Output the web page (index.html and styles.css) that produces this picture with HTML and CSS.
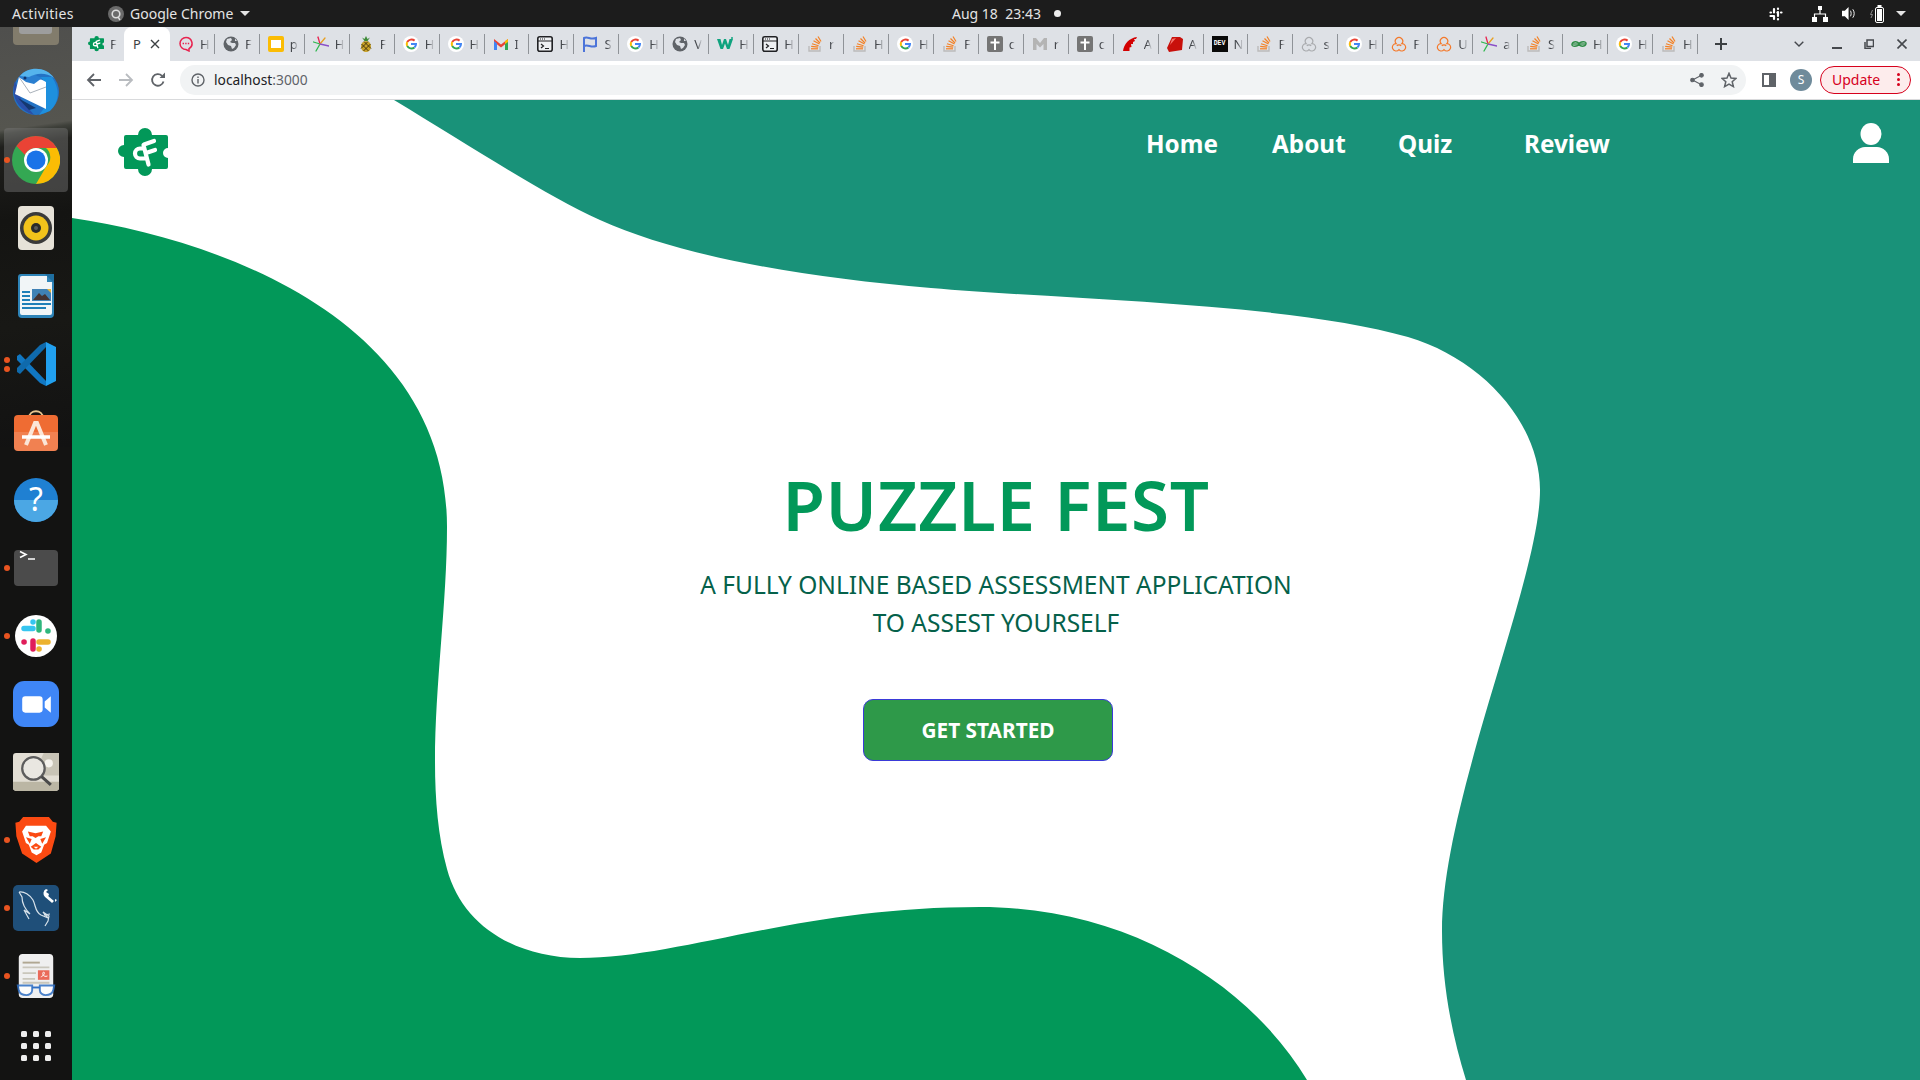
FILE: index.html
```html
<!DOCTYPE html>
<html lang="en">
<head>
<meta charset="utf-8">
<title>Puzzle Fest</title>
<link rel="stylesheet" href="styles.css">
</head>
<body>
<svg class="defs" width="0" height="0" aria-hidden="true">
  <symbol id="i-puzzle" viewBox="0 0 50 50"><path fill="#029859" d="M8 7H20a7 7 0 0 1 14 0H48a2 2 0 0 1 2 2V20a5 5 0 0 0 0 10V39a2 2 0 0 1-2 2H34a7 7 0 0 1-14 0H8a2 2 0 0 1-2-2V29a6 6 0 0 1 0-12V9a2 2 0 0 1 2-2z"/><path fill="none" stroke="#fff" stroke-width="4.200" stroke-linecap="round" d="M26 20.500h-4a5 5 0 0 0 0 10h5M25.500 17l5 19.500M26 16.500l10-3.500M28 25l9-3"/></symbol>
  <symbol id="i-chat" viewBox="0 0 16 16"><path fill="none" stroke="#e8234f" stroke-width="1.500" d="M8 1.500a6 6 0 0 1 3 11.200V15l-3-1.500A6 6 0 0 1 8 1.500z"/><path stroke="#e8234f" stroke-width="1.400" stroke-dasharray="1.400 1.200" d="M4.600 7.500h7"/></symbol>
  <symbol id="i-globe" viewBox="0 0 16 16"><circle cx="8" cy="8" r="7.500" fill="#5f6368"/><path fill="#dee1e6" d="M4 3l4-1 1 2-2 2 2 1 3 0 1 2-2 3-2 1-1-3-3-1-2-3zM12 2.500l2 2.500-2 0z"/></symbol>
  <symbol id="i-slides" viewBox="0 0 16 16"><rect width="16" height="16" rx="2" fill="#fbbc04"/><rect x="3" y="4" width="10" height="8" fill="#fff"/></symbol>
  <symbol id="i-star" viewBox="0 0 16 16"><g fill="none" stroke-width="1.300" stroke-linecap="round"><path stroke="#e8234f" d="M7 8L5 1"/><path stroke="#2db84d" d="M7 8L3 15"/><path stroke="#2db84d" d="M7 8L0.500 6"/><path stroke="#e8a020" d="M7 8l5-6"/><path stroke="#8a4fc7" d="M7 8l9 2"/></g></symbol>
  <symbol id="i-pine" viewBox="0 0 16 16"><path fill="#3d8b37" d="M8 0l1.500 3L12 1.500 9.500 5h-3L4 1.500 6.500 3z"/><ellipse cx="8" cy="10.500" rx="5" ry="5.500" fill="#c9a227"/><path stroke="#3a2c10" stroke-width=".9" fill="none" d="M3.500 8l7 7M6 5.500l7 7M12.500 8l-7 7M10 5.500l-7 7"/></symbol>
  <symbol id="i-g" viewBox="0 0 16 16"><circle cx="8" cy="8" r="8" fill="#fff"/><path fill="none" stroke="#ea4335" stroke-width="2" d="M11.600 4.600A5 5 0 0 0 4.200 6"/><path fill="none" stroke="#fbbc05" stroke-width="2" d="M4.200 6a5 5 0 0 0 0 4"/><path fill="none" stroke="#34a853" stroke-width="2" d="M4.200 10a5 5 0 0 0 7.200 1.600"/><path fill="none" stroke="#4285f4" stroke-width="2" d="M11.400 11.600A5 5 0 0 0 13 8H8"/></symbol>
  <symbol id="i-gmail" viewBox="0 0 16 16"><path fill="#ea4335" d="M1 3l7 5.500L15 3v3L8 11.500 1 6z"/><path fill="#4285f4" d="M1 5l3 2.500V14H1z"/><path fill="#34a853" d="M15 5l-3 2.500V14h3z"/><path fill="#fbbc04" d="M12 5l3-2v3l-3 2z"/></symbol>
  <symbol id="i-console" viewBox="0 0 16 16"><rect x=".8" y=".8" width="14.400" height="14.400" rx="2" fill="#eef0f3" stroke="#202124" stroke-width="1.600"/><path fill="none" stroke="#202124" stroke-width="1.200" d="M1 5h14M4 8l2.500 2L4 12M8 12.500h4"/><path stroke="#202124" stroke-dasharray="1 1" d="M3 3h5"/></symbol>
  <symbol id="i-flag" viewBox="0 0 16 16"><path fill="none" stroke="#4c74d9" stroke-width="2" d="M2 16V2c4-2 6 2 12 0v8c-5 2-8-2-12 0"/></symbol>
  <symbol id="i-so" viewBox="0 0 16 16"><path fill="none" stroke="#bcbbbb" stroke-width="1.400" d="M2 10v5h11v-5"/><g fill="none" stroke="#f48024" stroke-width="1.200"><path d="M4 12.800h7"/><path d="M4.200 10.300l7 .8"/><path d="M5 7.800l6.600 2"/><path d="M6.500 4.800l6 3.200"/><path d="M8.500 2.500l4.500 4.500"/><path d="M11 .5l3 5"/></g></symbol>
  <symbol id="i-cross" viewBox="0 0 16 16"><rect width="16" height="16" rx="2" fill="#757575"/><path fill="none" stroke="#fff" stroke-width="2" d="M8 2.500V14M3.500 6.500h9"/></symbol>
  <symbol id="i-greym" viewBox="0 0 16 16"><path fill="#b4b4b4" d="M1 14V2h3l4 5 4-5h3v12h-3.500V8L8 11.500 4.500 8v6z"/></symbol>
  <symbol id="i-rails" viewBox="0 0 16 16"><path fill="#d30001" d="M1 15C2 8 7 2 15 1l-1 2-2 0 1 2-2 1 0 2-2 0 .5 3-2 .5 0 3.500z"/></symbol>
  <symbol id="i-ruby" viewBox="0 0 16 16"><path fill="#c8100b" d="M5 1h8l3 2-1 11-13 2-2-4z"/><path fill="#f4736b" d="M5 3l-2 6 6-7z"/></symbol>
  <symbol id="i-cloud" viewBox="0 0 16 16"><path fill="none" stroke="currentColor" stroke-width="1.200" d="M5.200 7.600A3.700 3.700 0 1 1 10.800 7.600A3.700 3.700 0 1 1 8 13.600A3.700 3.700 0 1 1 5.200 7.600ZM5.800 9.800A3 3 0 0 1 10.200 9.800"/></symbol>
  <symbol id="i-geeks" viewBox="0 0 16 16"><g fill="none" stroke="#2f8d46" stroke-width="1.300"><path d="M8 8c-1-3-6-3-7 0s6 3 7 0c1 3 6 3 7 0s-6-3-7 0z"/><path d="M1 8h14"/></g></symbol>
</svg>

<header class="topbar">
  <span class="tb-activities">Activities</span>
  <span class="tb-app">
    <svg class="tb-chrome" viewBox="0 0 16 16"><circle cx="8" cy="8" r="8" fill="#6a6a6a"/><circle cx="8" cy="8" r="3.800" fill="none" stroke="#ddd" stroke-width="1.600"/><path stroke="#ddd" stroke-width="1.400" d="M10 11l2 3"/></svg>
    Google Chrome<i class="caret"></i>
  </span>
  <span class="tb-clock">Aug 18&nbsp; 23:43<i class="tb-dot"></i></span>
  <span class="tb-tray">
    <svg class="tray-slack" viewBox="0 0 14 14"><g stroke="#fff" stroke-width="2.200" stroke-linecap="round"><path d="M5 2v3.500M1.500 5.500h.5M9 1.500v.5M9 5v4M12.500 5.500H12M1.500 9H5M9 12.500V12M5 9v3"/><path d="M8.500 5.500h-.1"/></g></svg>
    <svg class="tray-net" viewBox="0 0 16 16"><path fill="#fff" d="M6 0h4v4H6zM0 11h5v5H0zM11 11h5v5h-5z"/><path fill="none" stroke="#fff" stroke-width="1.200" d="M8 4v4M2.500 11V8h11v3"/></svg>
    <svg class="tray-vol" viewBox="0 0 16 16"><path fill="#fff" d="M0 5h3l4-4v14l-4-4H0z"/><path fill="none" stroke="#fff" stroke-width="1" d="M9 5c1 1.500 1 4.500 0 6M11.500 3.500c2 2.500 2 6.500 0 9"/></svg>
    <svg class="tray-bat" viewBox="0 0 14 18"><path fill="none" stroke="#888" stroke-width="1" d="M2.500 5L.5 9.500h2L1 13"/><rect x="5.500" y="2.500" width="8" height="15" rx="1.500" fill="#1c1c1c" stroke="#fff"/><rect x="7.500" y="0" width="4" height="2" fill="#fff"/><rect x="7" y="4" width="5" height="12" fill="#fff"/></svg>
    <i class="caret caret-tray"></i>
  </span>
</header>

<div class="desktop">
  <nav class="dock" aria-label="Dock">
    <div class="dock-first">
      <svg class="dock-files" viewBox="0 0 46 22"><rect x="0" y="-6" width="46" height="27" rx="4" fill="#827c6c"/><rect x="6" y="-6" width="33" height="16" rx="3" fill="#9d9d9d"/></svg>
    </div>
    <div class="dock-item">
      <svg class="icon-48" viewBox="0 0 48 48">
        <circle cx="24" cy="24" r="23" fill="#2372c4"/>
        <path fill="#2a4fa8" d="M3 13C-2 28 6 42 22 47L9 31z"/>
        <path fill="#1e90de" d="M40 9c8 12 8 24-2 34l-11 4 6-8 1-16c0-6-1-10-6-14z"/>
        <path fill="#14386f" d="M6 30l18 10-7 2z"/>
        <path fill="#fff" d="M7 9l9 5q10-6 18 0L34 41 3 26z"/>
        <path fill="none" stroke="#aab2bb" d="M7 9l11 16 16-6"/>
        <path fill="#2a7fd0" d="M7 9l9-5 14 6-8 6-8-2z"/>
        <path fill="#55b4ec" d="M8 8C16-2 34-2 42 10 34 4 24 5 17 9z"/>
        <circle cx="13" cy="10" r="1.500" fill="#10356d"/>
      </svg>
    </div>
    <div class="dock-item is-active dot-1">
      <div class="dock-tile">
        <svg class="icon-48b" viewBox="0 0 48 48">
          <circle cx="24" cy="24" r="24" fill="#34a853"/>
          <path fill="#ea4335" d="M24 0a24 24 0 0 1 20.800 12H24a12 12 0 0 0-11 7L4.400 10A24 24 0 0 1 24 0z"/>
          <path fill="#fbbc04" d="M44.800 12A24 24 0 0 1 24 48l10.500-18A12 12 0 0 0 34 12z"/>
          <circle cx="24" cy="24" r="12" fill="#fff"/>
          <circle cx="24" cy="24" r="9.500" fill="#1a73e8"/>
        </svg>
      </div>
    </div>
    <div class="dock-item">
      <svg class="icon-44" viewBox="0 0 44 44">
        <rect x="0" y="0" width="36" height="44" rx="4" transform="translate(4)" fill="#e6e2d8"/>
        <circle cx="22" cy="22" r="16" fill="#3a3a3a"/><circle cx="22" cy="22" r="12.500" fill="#f1c21b"/><circle cx="22" cy="22" r="5" fill="#2a2a2a"/><circle cx="22" cy="22" r="2" fill="#5a5a5a"/>
      </svg>
    </div>
    <div class="dock-item">
      <svg class="icon-44" viewBox="0 0 44 44">
        <path fill="#2e84b8" d="M7 0h26l7 8v32a4 4 0 0 1-4 4H8a4 4 0 0 1-4-4V3a3 3 0 0 1 3-3z"/>
        <path fill="#f1f5f7" d="M8 2h25v6h5v31a2 2 0 0 1-2 2H8a2 2 0 0 1-2-2V4a2 2 0 0 1 2-2z"/>
        <path fill="#1f6fa0" d="M31 0h9v9z"/>
        <path fill="#1f7fb8" d="M8 17h8v2H8zM8 21h8v2H8zM8 25h8v2H8zM8 29h29v2H8zM8 33h24v2H8z"/>
        <rect x="18" y="15" width="19" height="12" fill="#3f81b5"/><path fill="#433" d="M19 26l6-7 3 3 3-2 5 6z"/><path fill="#e8b53a" d="M33 15h4v4z"/>
      </svg>
    </div>
    <div class="dock-item dot-2">
      <svg class="icon-44" viewBox="0 0 44 44">
        <path fill="#1177c2" d="M3 14l3-2 27 28-1 4-6-3L3 18z"/>
        <path fill="#0f6aac" d="M3 30l3 2 27-28-1-4-6 3L3 26z"/>
        <path fill="#21a0ef" d="M32 0l10 5v34l-10 5z"/>
      </svg>
    </div>
    <div class="dock-item">
      <svg class="icon-44" viewBox="0 0 44 44">
        <path fill="none" stroke="#e6c590" stroke-width="1.800" d="M15 8c0-9 14-9 14 0"/>
        <rect y="5" width="44" height="36" rx="4" fill="#ef6c33"/>
        <path fill="#fff" opacity=".15" d="M0 22h44v15a4 4 0 0 1-4 4H4a4 4 0 0 1-4-4z"/>
        <path fill="none" stroke="#fbe6d8" stroke-width="4" d="M12 35l9-22h2l9 22"/>
        <path fill="none" stroke="#fff" stroke-width="3.500" d="M8 27h28"/>
      </svg>
    </div>
    <div class="dock-item">
      <svg class="icon-44" viewBox="0 0 44 44">
        <circle cx="22" cy="22" r="22" fill="#1f80d2"/>
        <path fill="#4ba7e4" d="M0 22a22 22 0 0 0 44 0z"/>
        <text x="22" y="33" class="sym-help">?</text>
      </svg>
    </div>
    <div class="dock-item dot-1">
      <svg class="icon-44" viewBox="0 0 44 36">
        <rect width="44" height="36" rx="4" fill="#4b4b4b"/>
        <path fill="none" stroke="#fff" stroke-width="1.600" d="M6 1.500l6 3-6 3M14 9h7"/>
      </svg>
    </div>
    <div class="dock-item dot-1">
      <svg class="icon-41" viewBox="0 0 42 42">
        <circle cx="21" cy="21" r="21" fill="#fff"/>
        <g stroke-width="5.500" stroke-linecap="round" fill="none">
          <path stroke="#36c5f0" d="M18 13.500H9M18 7v.1"/>
          <path stroke="#2eb67d" d="M24 15V7M33 16h-.1"/>
          <path stroke="#ecb22e" d="M24 27h9M24 34h.1"/>
          <path stroke="#e01e5a" d="M18 26v8M9 27h.1"/>
        </g>
      </svg>
    </div>
    <div class="dock-item">
      <svg class="icon-45" viewBox="0 0 45 45">
        <rect width="45" height="45" rx="11" fill="#3f86f6"/>
        <rect x="9" y="15" width="20" height="16" rx="3" fill="#fff"/>
        <path fill="#fff" d="M31 20l6-5v16l-6-5z"/>
      </svg>
    </div>
    <div class="dock-item">
      <svg class="icon-45" viewBox="0 0 45 37">
        <rect width="45" height="37" rx="3" fill="#e2ded4"/>
        <path fill="#c8c4b6" d="M30 0h15v22H20z"/>
        <path fill="#bbb6a4" d="M0 28h45v6a3 3 0 0 1-3 3H3a3 3 0 0 1-3-3z"/>
        <circle cx="35" cy="10" r="4" fill="#f4f2ec"/>
        <circle cx="20" cy="15" r="11" fill="#e9e7e1" stroke="#5c5c5c" stroke-width="2.200"/>
        <path stroke="#4a4a4a" stroke-width="3" d="M28 23l9 8"/>
      </svg>
    </div>
    <div class="dock-item dot-1">
      <svg class="icon-45" viewBox="0 0 45 48">
        <path fill="#fb4a12" d="M9 0h27l4 5 4 1-1 14-5 18-15 10-15-10L2 20 1 6l4-1z"/>
        <path fill="#fff" d="M12 9h21l5 6-4 12-3 2-3 8-5 3-5-3-3-8-3-2-4-12z"/>
        <path fill="#fb4a12" d="M14 15l8 2 8-2-2 5h-3l-3 2-3-2h-3zM12 21l6 2-2 5zM33 21l-6 2 2 5zM17 31l5.500-4 5.500 4-3 3h-5z"/>
        <path fill="#fff" d="M20 31h5l-2.500 2z"/>
      </svg>
    </div>
    <div class="dock-item dot-1">
      <svg class="icon-45" viewBox="0 0 46 46">
        <rect width="46" height="46" rx="5" fill="#1f4f79"/>
        <path fill="none" stroke="#d7e2ea" stroke-width="1.200" d="M6 7c5-1 11 3 14 8 3 6 2 12 8 15l7 3-5-6 6 4-1 5-3 5M6 7l3 5c0 7 4 13 8 17l-6-4 5 9M31 30l6-1"/>
        <path fill="none" stroke="#fff" stroke-width="2.800" d="M33 11l7 6"/><path fill="#fff" d="M33 4a5 5 0 0 0-1 8l3 0 1-3-3-2 2-2zM42 17l2-2-2-1z"/>
      </svg>
    </div>
    <div class="dock-item dot-1">
      <svg class="icon-44" viewBox="0 0 44 46">
        <rect x="4" width="36" height="46" rx="4" fill="#efefef"/>
        <path fill="#b0a792" d="M8 8h18v2H8z"/>
        <path fill="#c9c6bb" d="M8 13h28v2H8zM8 19h14v2H8zM8 25h13v2H8zM8 29h28v2H8z"/>
        <rect x="24" y="17" width="12" height="10" fill="#ea6a5a"/><path fill="none" stroke="#fff" d="M27 24c3-1 5-5 3-5s-1 6 4 4"/>
        <path fill="#fff" opacity=".85" stroke="#2f6fc4" stroke-width="2" d="M3 33h15v5c0 3-3 5-6 5s-7-1-8-5zM26 33h15l-1 5c-1 4-5 5-8 5s-6-2-6-5z"/>
        <path stroke="#2f6fc4" stroke-width="2" d="M18 35h8"/>
      </svg>
    </div>
    <div class="dock-grid" aria-label="Show applications">
      <i></i><i></i><i></i><i></i><i></i><i></i><i></i><i></i><i></i>
    </div>
  </nav>

  <div class="browser">
    <div class="tabstrip">
      <div class="tab"><svg class="fav"><use href="#i-puzzle"/></svg><span class="tl">F</span></div>
      <div class="tab tab-active"><span class="tl">P</span><svg class="tab-x" viewBox="0 0 10 10"><path d="M1 1l8 8M9 1l-8 8"/></svg></div>
      <div class="tab sep"><svg class="fav"><use href="#i-chat"/></svg><span class="tl">H</span></div>
      <div class="tab sep"><svg class="fav"><use href="#i-globe"/></svg><span class="tl">F</span></div>
      <div class="tab sep"><svg class="fav"><use href="#i-slides"/></svg><span class="tl">p</span></div>
      <div class="tab sep"><svg class="fav"><use href="#i-star"/></svg><span class="tl">H</span></div>
      <div class="tab sep"><svg class="fav"><use href="#i-pine"/></svg><span class="tl">F</span></div>
      <div class="tab sep"><svg class="fav"><use href="#i-g"/></svg><span class="tl">H</span></div>
      <div class="tab sep"><svg class="fav"><use href="#i-g"/></svg><span class="tl">H</span></div>
      <div class="tab sep"><svg class="fav"><use href="#i-gmail"/></svg><span class="tl">I</span></div>
      <div class="tab sep"><svg class="fav"><use href="#i-console"/></svg><span class="tl">H</span></div>
      <div class="tab sep"><svg class="fav"><use href="#i-flag"/></svg><span class="tl">S</span></div>
      <div class="tab sep"><svg class="fav"><use href="#i-g"/></svg><span class="tl">H</span></div>
      <div class="tab sep"><svg class="fav"><use href="#i-globe"/></svg><span class="tl">V</span></div>
      <div class="tab sep"><svg class="fav" viewBox="0 0 16 16"><path fill="#10a37f" d="M0 3h3.500l1.500 6 2-6h2l2 6 1.500-6H16l-3.500 10h-2.500L8 7.500 6 13H3.500z"/><circle cx="15" cy="2" r="1" fill="#10a37f"/></svg><span class="tl">H</span></div>
      <div class="tab sep"><svg class="fav"><use href="#i-console"/></svg><span class="tl">H</span></div>
      <div class="tab sep"><svg class="fav"><use href="#i-so"/></svg><span class="tl">r</span></div>
      <div class="tab sep"><svg class="fav"><use href="#i-so"/></svg><span class="tl">H</span></div>
      <div class="tab sep"><svg class="fav"><use href="#i-g"/></svg><span class="tl">H</span></div>
      <div class="tab sep"><svg class="fav"><use href="#i-so"/></svg><span class="tl">F</span></div>
      <div class="tab sep"><svg class="fav"><use href="#i-cross"/></svg><span class="tl">c</span></div>
      <div class="tab sep"><svg class="fav"><use href="#i-greym"/></svg><span class="tl">r</span></div>
      <div class="tab sep"><svg class="fav"><use href="#i-cross"/></svg><span class="tl">c</span></div>
      <div class="tab sep"><svg class="fav"><use href="#i-rails"/></svg><span class="tl">A</span></div>
      <div class="tab sep"><svg class="fav"><use href="#i-ruby"/></svg><span class="tl">A</span></div>
      <div class="tab sep"><span class="fav-dev">DEV</span><span class="tl">N</span></div>
      <div class="tab sep"><svg class="fav"><use href="#i-so"/></svg><span class="tl">F</span></div>
      <div class="tab sep cloud-grey"><svg class="fav"><use href="#i-cloud"/></svg><span class="tl">s</span></div>
      <div class="tab sep"><svg class="fav"><use href="#i-g"/></svg><span class="tl">H</span></div>
      <div class="tab sep cloud-orange"><svg class="fav"><use href="#i-cloud"/></svg><span class="tl">F</span></div>
      <div class="tab sep cloud-orange"><svg class="fav"><use href="#i-cloud"/></svg><span class="tl">U</span></div>
      <div class="tab sep"><svg class="fav"><use href="#i-star"/></svg><span class="tl">a</span></div>
      <div class="tab sep"><svg class="fav"><use href="#i-so"/></svg><span class="tl">S</span></div>
      <div class="tab sep"><svg class="fav"><use href="#i-geeks"/></svg><span class="tl">H</span></div>
      <div class="tab sep"><svg class="fav"><use href="#i-g"/></svg><span class="tl">H</span></div>
      <div class="tab sep"><svg class="fav"><use href="#i-so"/></svg><span class="tl">H</span></div>
      <svg class="tab-new" viewBox="0 0 12 12"><path d="M6 0v12M0 6h12"/></svg>
      <svg class="tab-list" viewBox="0 0 10 6"><path d="M.7.700L5 5l4.300-4.300"/></svg>
      <svg class="win-min" viewBox="0 0 10 10"><path d="M0 9h10"/></svg>
      <svg class="win-max" viewBox="0 0 10 10"><path d="M3 1h6.500v6.500H3zM1 3v6.500h6"/></svg>
      <svg class="win-close" viewBox="0 0 10 10"><path d="M.5.500l9 9M9.500.500l-9 9"/></svg>
    </div>

    <div class="toolbar">
      <svg class="tool tool-back" viewBox="0 0 16 16"><path d="M15 8H2M8 2L2 8l6 6"/></svg>
      <svg class="tool tool-fwd" viewBox="0 0 16 16"><path d="M1 8h13M8 2l6 6-6 6"/></svg>
      <svg class="tool tool-reload" viewBox="0 0 16 16"><path d="M13.500 9.500A5.800 5.800 0 1 1 12 3.800"/><path class="fill" d="M9.500 6H15V.5z"/></svg>
      <div class="omnibox">
        <svg class="omni-info" viewBox="0 0 14 14"><circle cx="7" cy="7" r="6"/><path d="M7 6v4.500M7 3.500v1.500"/></svg>
        <span class="omni-url">localhost<span class="omni-port">:3000</span></span>
        <svg class="omni-share" viewBox="0 0 14 14"><circle cx="11.500" cy="2.300" r="1.800"/><circle cx="2.500" cy="7" r="1.800"/><circle cx="11.500" cy="11.700" r="1.800"/><path d="M11.500 2.300L2.500 7l9 4.700" fill="none"/></svg>
        <svg class="omni-star" viewBox="0 0 16 16"><path d="M8 1.300l2 4.700 5 .4-3.800 3.300 1.200 4.900L8 12l-4.400 2.600 1.200-4.900L1 6.400 6 6z"/></svg>
      </div>
      <svg class="side-panel" viewBox="0 0 14 14"><rect x="1" y="1" width="12" height="12" fill="none" stroke="#5f6368" stroke-width="2"/><rect x="7" y="1" width="6" height="12" fill="#5f6368"/></svg>
      <span class="avatar">S</span>
      <span class="update">Update<i class="update-dots"><b></b><b></b><b></b></i></span>
    </div>

    <main class="page">
      <svg class="waves" viewBox="72 100 1848 980" preserveAspectRatio="none" aria-hidden="true">
        <rect x="72" y="100" width="1848" height="980" fill="#199279"/>
        <path fill="#fff" d="M394 100C470 146 545 195 600 220C680 256 800 277 931 288C1070 300 1290 303 1408 337C1485 360 1540 425 1540 490C1540 580 1442 800 1442 931C1442 985 1452 1035 1466 1080L72 1080L72 100Z"/>
        <path fill="#029859" d="M72 218C220 240 447 320 447 527C447 640 420 770 447 869C462 925 515 958 580 958C680 958 800 907 980 907C1130 907 1250 985 1307 1080L72 1080Z"/>
      </svg>
      <div class="page-head">
        <svg class="logo"><use href="#i-puzzle"/></svg>
        <ul class="nav">
          <li class="nav-home">Home</li>
          <li class="nav-about">About</li>
          <li class="nav-quiz">Quiz</li>
          <li class="nav-review">Review</li>
        </ul>
        <svg class="user" viewBox="0 0 36 40"><ellipse cx="18" cy="11" rx="10.500" ry="11"/><path d="M0 40v-4C0 29 6 24 12 24h12c6 0 12 5 12 12v4z"/></svg>
      </div>
      <section class="hero">
        <h1 class="hero-title">PUZZLE FEST</h1>
        <p class="hero-sub">A FULLY ONLINE BASED ASSESSMENT APPLICATION<br>TO ASSEST YOURSELF</p>
        <button class="hero-btn">GET STARTED</button>
      </section>
    </main>
  </div>
</div>
</body>
</html>
```
FILE: styles.css
```css
* { box-sizing: border-box; }
html, body { margin: 0; height: 100%; }
body {
  width: 1920px; height: 1080px; overflow: hidden;
  display: flex; flex-direction: column;
  font-family: "Noto Sans", "Open Sans", sans-serif;
  background: #141414;
}
.defs { position: absolute; }
.sym-help { font: 400 32px "Noto Sans", sans-serif; fill: #fff; text-anchor: middle; }

/* top bar */
.topbar {
  height: 27px; flex: none; background: #1c1c1c; color: #e4e4e4;
  display: flex; align-items: center; font-size: 14px; white-space: nowrap;
}
.tb-activities { margin-left: 12px; width: 96px; letter-spacing: .35px; }
.tb-app { display: flex; align-items: center; width: 844px; gap: 6px; }
.tb-chrome { width: 16px; height: 16px; }
.caret { width: 0; height: 0; border: 5px solid transparent; border-top: 5px solid #e4e4e4; border-bottom: 0; margin-left: 1px; }
.tb-clock { display: flex; align-items: center; width: 600px; }
.tb-dot { width: 7px; height: 7px; border-radius: 50%; background: #eee; margin-left: 13px; }
.tb-tray { display: flex; align-items: center; margin-left: auto; margin-right: 14px; }
.tray-slack { width: 14px; height: 14px; }
.tray-net { width: 16px; height: 16px; margin-left: 29px; }
.tray-vol { width: 15px; height: 15px; margin-left: 14px; }
.tray-bat { width: 14px; height: 18px; margin-left: 13px; }
.caret-tray { margin-left: 12px; }

.desktop { flex: 1; display: flex; min-height: 0; }

/* dock */
.dock {
  width: 72px; flex: none; overflow: hidden; display: flex; flex-direction: column;
  background:
    linear-gradient(172deg, #4f4f4d 0, #55554f 24%, #3e403a 25%, #1f1f1c 28%, #141412 45%, #181815 70%, #121212 100%) 0 0 / 72px 420px no-repeat,
    #131312;
}
.dock-first { height: 31px; flex: none; display: flex; justify-content: center; align-items: flex-start; overflow: hidden; }
.dock-files { width: 46px; height: 22px; margin-top: -3px; }
.dock-item { height: 68px; flex: none; display: flex; align-items: center; justify-content: center; position: relative; }
.dock-tile { width: 64px; height: 64px; border-radius: 4px; background: rgba(120,120,120,.45); display: flex; align-items: center; justify-content: center; }
.dock-item.dot-1::before, .dock-item.dot-2::before, .dock-item.dot-2::after {
  content: ""; position: absolute; left: 4px; width: 6px; height: 6px; border-radius: 50%; background: #e95420;
}
.dock-item.dot-1::before { top: 31px; }
.dock-item.dot-2::before { top: 27px; }
.dock-item.dot-2::after { top: 36px; }
.icon-48 { width: 48px; height: 48px; }
.icon-48b { width: 48px; height: 48px; }
.icon-44 { width: 44px; height: 44px; }
.icon-41 { width: 42px; height: 42px; }
.icon-45 { width: 46px; height: 46px; }
.dock-grid { display: grid; grid-template-columns: repeat(3, 6px); gap: 6px; margin: 21px auto 0; justify-content: center; }
.dock-grid i { width: 6px; height: 6px; border-radius: 1.500px; background: #eeeeee; }

/* browser */
.browser { flex: 1; display: flex; flex-direction: column; min-width: 0; }
.tabstrip { height: 34px; flex: none; background: #dee1e6; display: flex; align-items: center; padding-left: 8px; position: relative; }
.tab { width: 44.950px; height: 34px; flex: none; display: flex; align-items: center; padding-left: 8px; position: relative; overflow: hidden; font-size: 13px; color: #45484d; }
.tab .fav { width: 16px; height: 16px; flex: none; }
.fav-dev { width: 16px; height: 16px; flex: none; background: #0a0a0a; color: #fff; font: 700 6.500px/16px "Liberation Mono", monospace; text-align: center; }
.tab .tl { margin-left: 6px; flex: none; -webkit-mask-image: linear-gradient(to right, #000 40%, transparent 100%); mask-image: linear-gradient(to right, #000 40%, transparent 100%); }
.cloud-grey .fav { color: #a9abae; }
.cloud-orange .fav { color: #f4792b; }
.tab.sep::after { content: ""; position: absolute; right: 0; top: 7px; width: 1px; height: 20px; background: #8f9398; }
.tab-active { background: #fff; border-radius: 8px 8px 0 0; width: 46px; margin-left: -1px; padding-left: 9px; color: #3c4043; }
.tab-active .tl { margin-left: 0; width: 9px; -webkit-mask-image: none; mask-image: none; }
.tab-x { width: 10px; height: 10px; margin-left: 8px; fill: none; stroke: #3c4043; stroke-width: 1.400; }
.tab-new { width: 12px; height: 12px; margin-left: 17px; fill: none; stroke: #3c4043; stroke-width: 2; flex: none; }
.tab-list { width: 10px; height: 6px; margin-left: 67.500px; fill: none; stroke: #45484d; stroke-width: 1.400; flex: none; }
.win-min { width: 10px; height: 10px; margin-left: 28px; fill: none; stroke: #45484d; stroke-width: 2; flex: none; }
.win-max { width: 10px; height: 10px; margin-left: 21.500px; fill: none; stroke: #45484d; stroke-width: 1.500; flex: none; }
.win-close { width: 10px; height: 10px; margin-left: 23px; fill: none; stroke: #45484d; stroke-width: 1.600; flex: none; }

.toolbar { height: 39px; flex: none; background: #fff; border-bottom: 1px solid #d9dadc; display: flex; align-items: center; padding-bottom: 1px; }
.tool { width: 16px; height: 16px; fill: none; stroke: #5f6368; stroke-width: 1.800; flex: none; }
.tool .fill { fill: #5f6368; stroke: none; }
.tool-back { margin-left: 14px; }
.tool-fwd { margin-left: 16px; stroke: #b9bcc0; }
.tool-reload { margin-left: 16px; }
.omnibox { flex: 1; height: 30px; margin-left: 14px; border-radius: 15px; background: #f1f3f4; display: flex; align-items: center; padding-left: 11px; }
.omni-info { width: 14px; height: 14px; fill: none; stroke: #5f6368; stroke-width: 1.400; flex: none; }
.omni-url { margin-left: 9px; font-size: 13.800px; color: #202124; }
.omni-port { color: #5f6368; }
.omni-share { width: 14px; height: 14px; margin-left: auto; fill: #5f6368; stroke: #5f6368; stroke-width: 1.100; flex: none; }
.omni-star { width: 16px; height: 16px; margin-left: 17px; margin-right: 9px; fill: none; stroke: #5f6368; stroke-width: 1.500; flex: none; }
.side-panel { width: 14px; height: 14px; margin-left: 16px; flex: none; }
.avatar { width: 22px; height: 22px; border-radius: 50%; background: #6f8b9b; color: #fff; font-size: 12px; display: flex; align-items: center; justify-content: center; margin-left: 14px; flex: none; }
.update { width: 91px; height: 28px; margin-left: 8px; margin-right: 9px; flex: none; border: 1px solid #d6001c; border-radius: 14px; background: #fdecec; color: #d6001c; font-size: 14px; display: flex; align-items: center; padding-left: 11px; }
.update-dots { display: flex; flex-direction: column; gap: 2px; margin-left: auto; margin-right: 10px; }
.update-dots b { width: 3px; height: 3px; border-radius: 50%; background: #d6001c; }

/* page */
.page { flex: 1; position: relative; overflow: hidden; }
.waves { position: absolute; inset: 0; width: 100%; height: 100%; }
.page-head { position: relative; display: flex; padding: 28px 31px 0 46px; height: 80px; align-items: flex-start; }
.logo { width: 50px; height: 50px; flex: none; }
.nav { list-style: none; margin: 0 0 0 978px; padding: 0; display: flex; color: #fff; font-weight: 700; font-size: 24.300px; line-height: 32px; }
.nav li { flex: none; }
.nav-home { width: 126px; }
.nav-about { width: 126px; }
.nav-quiz { width: 126px; }
.nav-review { width: 100px; }
.user { width: 36px; height: 40px; fill: #fff; margin-left: auto; margin-top: -5px; flex: none; }

.hero { position: relative; display: flex; flex-direction: column; align-items: center; padding-top: 280px; }
.hero-title { margin: 0; font-size: 69px; line-height: 88px; font-weight: 600; color: #029859; letter-spacing: .6px; }
.hero-sub { margin: 0; margin-top: 18px; font-size: 24.500px; line-height: 38px; text-align: center; color: #05614a; font-weight: 400; }
.hero-btn { margin-top: 57px; margin-right: 16px; width: 250px; height: 62px; border: 1px solid #3a3ad8; border-radius: 10px; background: #2e9949; color: #fff; font: 700 20.800px "Noto Sans", sans-serif; }
```
